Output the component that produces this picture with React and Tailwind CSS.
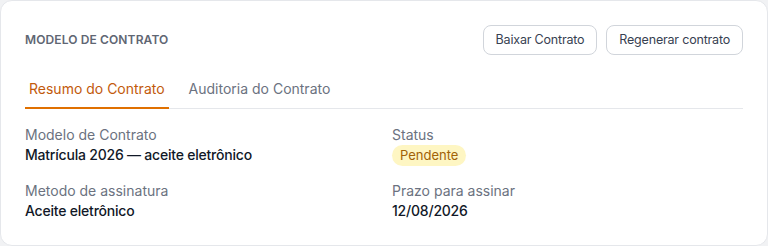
import React, { useState } from "react";

const tabs = ["Resumo do Contrato", "Auditoria do Contrato"];

function Field({ label, children }) {
    return (
        <div className="flex flex-col">
            <span className="text-sm leading-5 text-[#6b7280]">{label}</span>
            <div className="text-sm leading-5 font-medium tracking-[-0.015em] text-[#111827]">{children}</div>
        </div>
    );
}

export default function App() {
    const [active, setActive] = useState(0);

    return (
        <div className="h-[246px] w-[768px] bg-[#f1f2f4] font-['Inter',sans-serif]">
            <div className="h-full w-full rounded-xl border border-[#e5e7eb] bg-white px-6 py-6">
                {/* header */}
                <div className="flex items-center justify-between">
                    <h2 className="text-[12px] font-semibold uppercase tracking-[0.01em] text-[#5f6673]">
                        Modelo de Contrato
                    </h2>
                    <div className="flex gap-[9px]">
                        <button className="h-[30px] rounded-lg border border-[#d1d5db] px-3 text-[12.5px] tracking-[-0.015em] text-[#374151]">
                            Baixar Contrato
                        </button>
                        <button className="h-[30px] rounded-lg border border-[#d1d5db] px-3 text-[12.5px] tracking-[-0.015em] text-[#374151]">
                            Regenerar contrato
                        </button>
                    </div>
                </div>

                {/* tabs */}
                <div className="mt-4 flex gap-4 border-b border-[#e5e7eb]">
                    {tabs.map((t, i) => (
                        <button
                            key={t}
                            onClick={() => setActive(i)}
                            className={`-mb-px border-b-2 px-1 py-2 text-sm leading-5 ${
                                active === i
                                    ? "border-[#e07000] text-[#c25a0c]"
                                    : "border-transparent text-[#6b7280]"
                            }`}
                        >
                            {t}
                        </button>
                    ))}
                </div>

                {/* details */}
                <div className="mt-4 grid grid-cols-2 gap-x-4 gap-y-[15px]">
                    <Field label="Modelo de Contrato">Matrícula 2026 — aceite eletrônico</Field>
                    <Field label="Status">
                        <span className="inline-block rounded-full bg-[#fef6c3] px-2 py-px text-[13px] font-normal leading-[19px] tracking-normal text-[#a16207]">
                            Pendente
                        </span>
                    </Field>
                    <Field label="Metodo de assinatura">Aceite eletrônico</Field>
                    <Field label="Prazo para assinar">12/08/2026</Field>
                </div>
            </div>
        </div>
    );
}
